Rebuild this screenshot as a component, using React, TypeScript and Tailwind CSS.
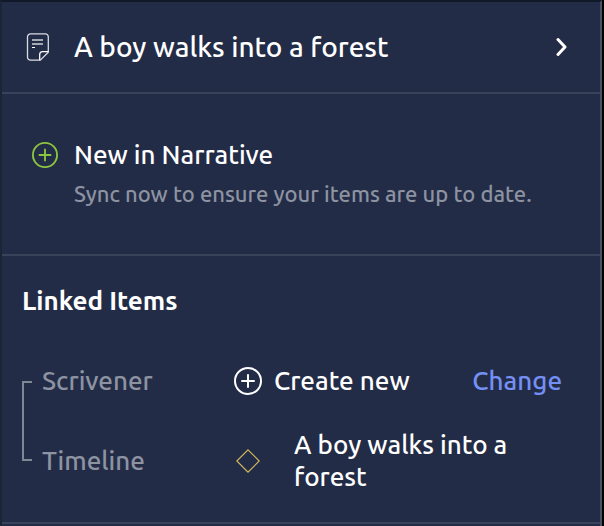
import React from "react";

function NoteIcon() {
  return (
    <svg width="24" height="28" viewBox="0 0 24 28" fill="none" aria-hidden="true">
      <path
        d="M4.5 .8h14.8a3 3 0 0 1 3 3v15.4l-8 8H4.5a3 3 0 0 1-3-3V3.8a3 3 0 0 1 3-3z"
        stroke="#d9dce3"
        strokeWidth="1.3"
      />
      <path d="M22.3 18.6h-5.6a3 3 0 0 0-3 3v5.6" stroke="#ffffff" strokeWidth="1.3" />
      <path d="M6 7h11M6 11h11" stroke="#a5a9b6" strokeWidth="2" />
      <path d="M6 14.5h3" stroke="#ffffff" strokeWidth="1" />
    </svg>
  );
}

function PlusCircle({ className }: { className: string }) {
  return (
    <svg viewBox="0 0 28 28" className={className} fill="none" stroke="currentColor" strokeWidth="2" strokeLinecap="round" aria-hidden="true">
      <circle cx="14" cy="14" r="13" />
      <path d="M14 8v12M8 14h12" />
    </svg>
  );
}

function Diamond() {
  return (
    <svg width="24" height="24" viewBox="0 0 24 24" fill="none" stroke="#d8bd5c" strokeWidth="1.1" aria-hidden="true">
      <path d="M12 .8L23.2 12L12 23.2L.8 12z" />
    </svg>
  );
}

export default function App() {
  return (
    <div className="flex min-h-screen flex-col bg-black pr-0.5 font-['Ubuntu','Noto_Sans',sans-serif] font-medium text-white">
      <main className="flex-1 border-x-2 border-t-2 border-t-[#111827] border-r-[#4a5066] border-l-[#1b2537] bg-[#232c47]">
        <button type="button" className="flex w-full items-center border-b-2 border-[#3a425a] py-7 pr-8 pl-6 text-left">
          <NoteIcon />
          <span className="ml-6 flex-1 text-[28px] leading-[34px]">A boy walks into a forest</span>
          <svg width="12" height="20" viewBox="0 0 12 20" fill="none" stroke="currentColor" strokeWidth="3" strokeLinecap="round" strokeLinejoin="round" aria-hidden="true">
            <path d="M2 2.5L9 10L2 17.5" />
          </svg>
        </button>

        <section className="flex border-b-2 border-[#3a425a] px-[30px] pt-11 pb-[42px]">
          <PlusCircle className="mt-1 h-[26px] w-[26px] shrink-0 text-[#8cc63f]" />
          <div className="ml-4">
            <h2 className="text-[26px] leading-[34px]">New in Narrative</h2>
            <p className="mt-1 text-[22px] leading-9 text-[#8d93a1]">Sync now to ensure your items are up to date.</p>
          </div>
        </section>

        <section className="border-b-2 border-[#3a425a] px-5 pt-[29px] pb-[29px]">
          <h2 className="mb-8 text-[26px] leading-8 font-bold">Linked Items</h2>
          <div className="flex">
            <div className="my-8 w-2.5 shrink-0 border-y-2 border-l-2 border-[#7f8794]" />
            <div className="flex flex-1 flex-col gap-4 pl-2.5 text-[26px] leading-8">
              <div className="flex h-16 items-center">
                <span className="w-48 text-[#8d93a1]">Scrivener</span>
                <PlusCircle className="mr-3 h-7 w-7 shrink-0" />
                <span>Create new</span>
                <button type="button" className="mr-[18px] ml-auto text-[#7590f5]">Change</button>
              </div>
              <div className="flex min-h-16 items-center">
                <span className="w-48 shrink-0 text-[#8d93a1]">Timeline</span>
                <span className="mr-[34px] ml-0.5 shrink-0"><Diamond /></span>
                <span className="max-w-60">A boy walks into a forest</span>
              </div>
            </div>
          </div>
        </section>
      </main>
    </div>
  );
}
